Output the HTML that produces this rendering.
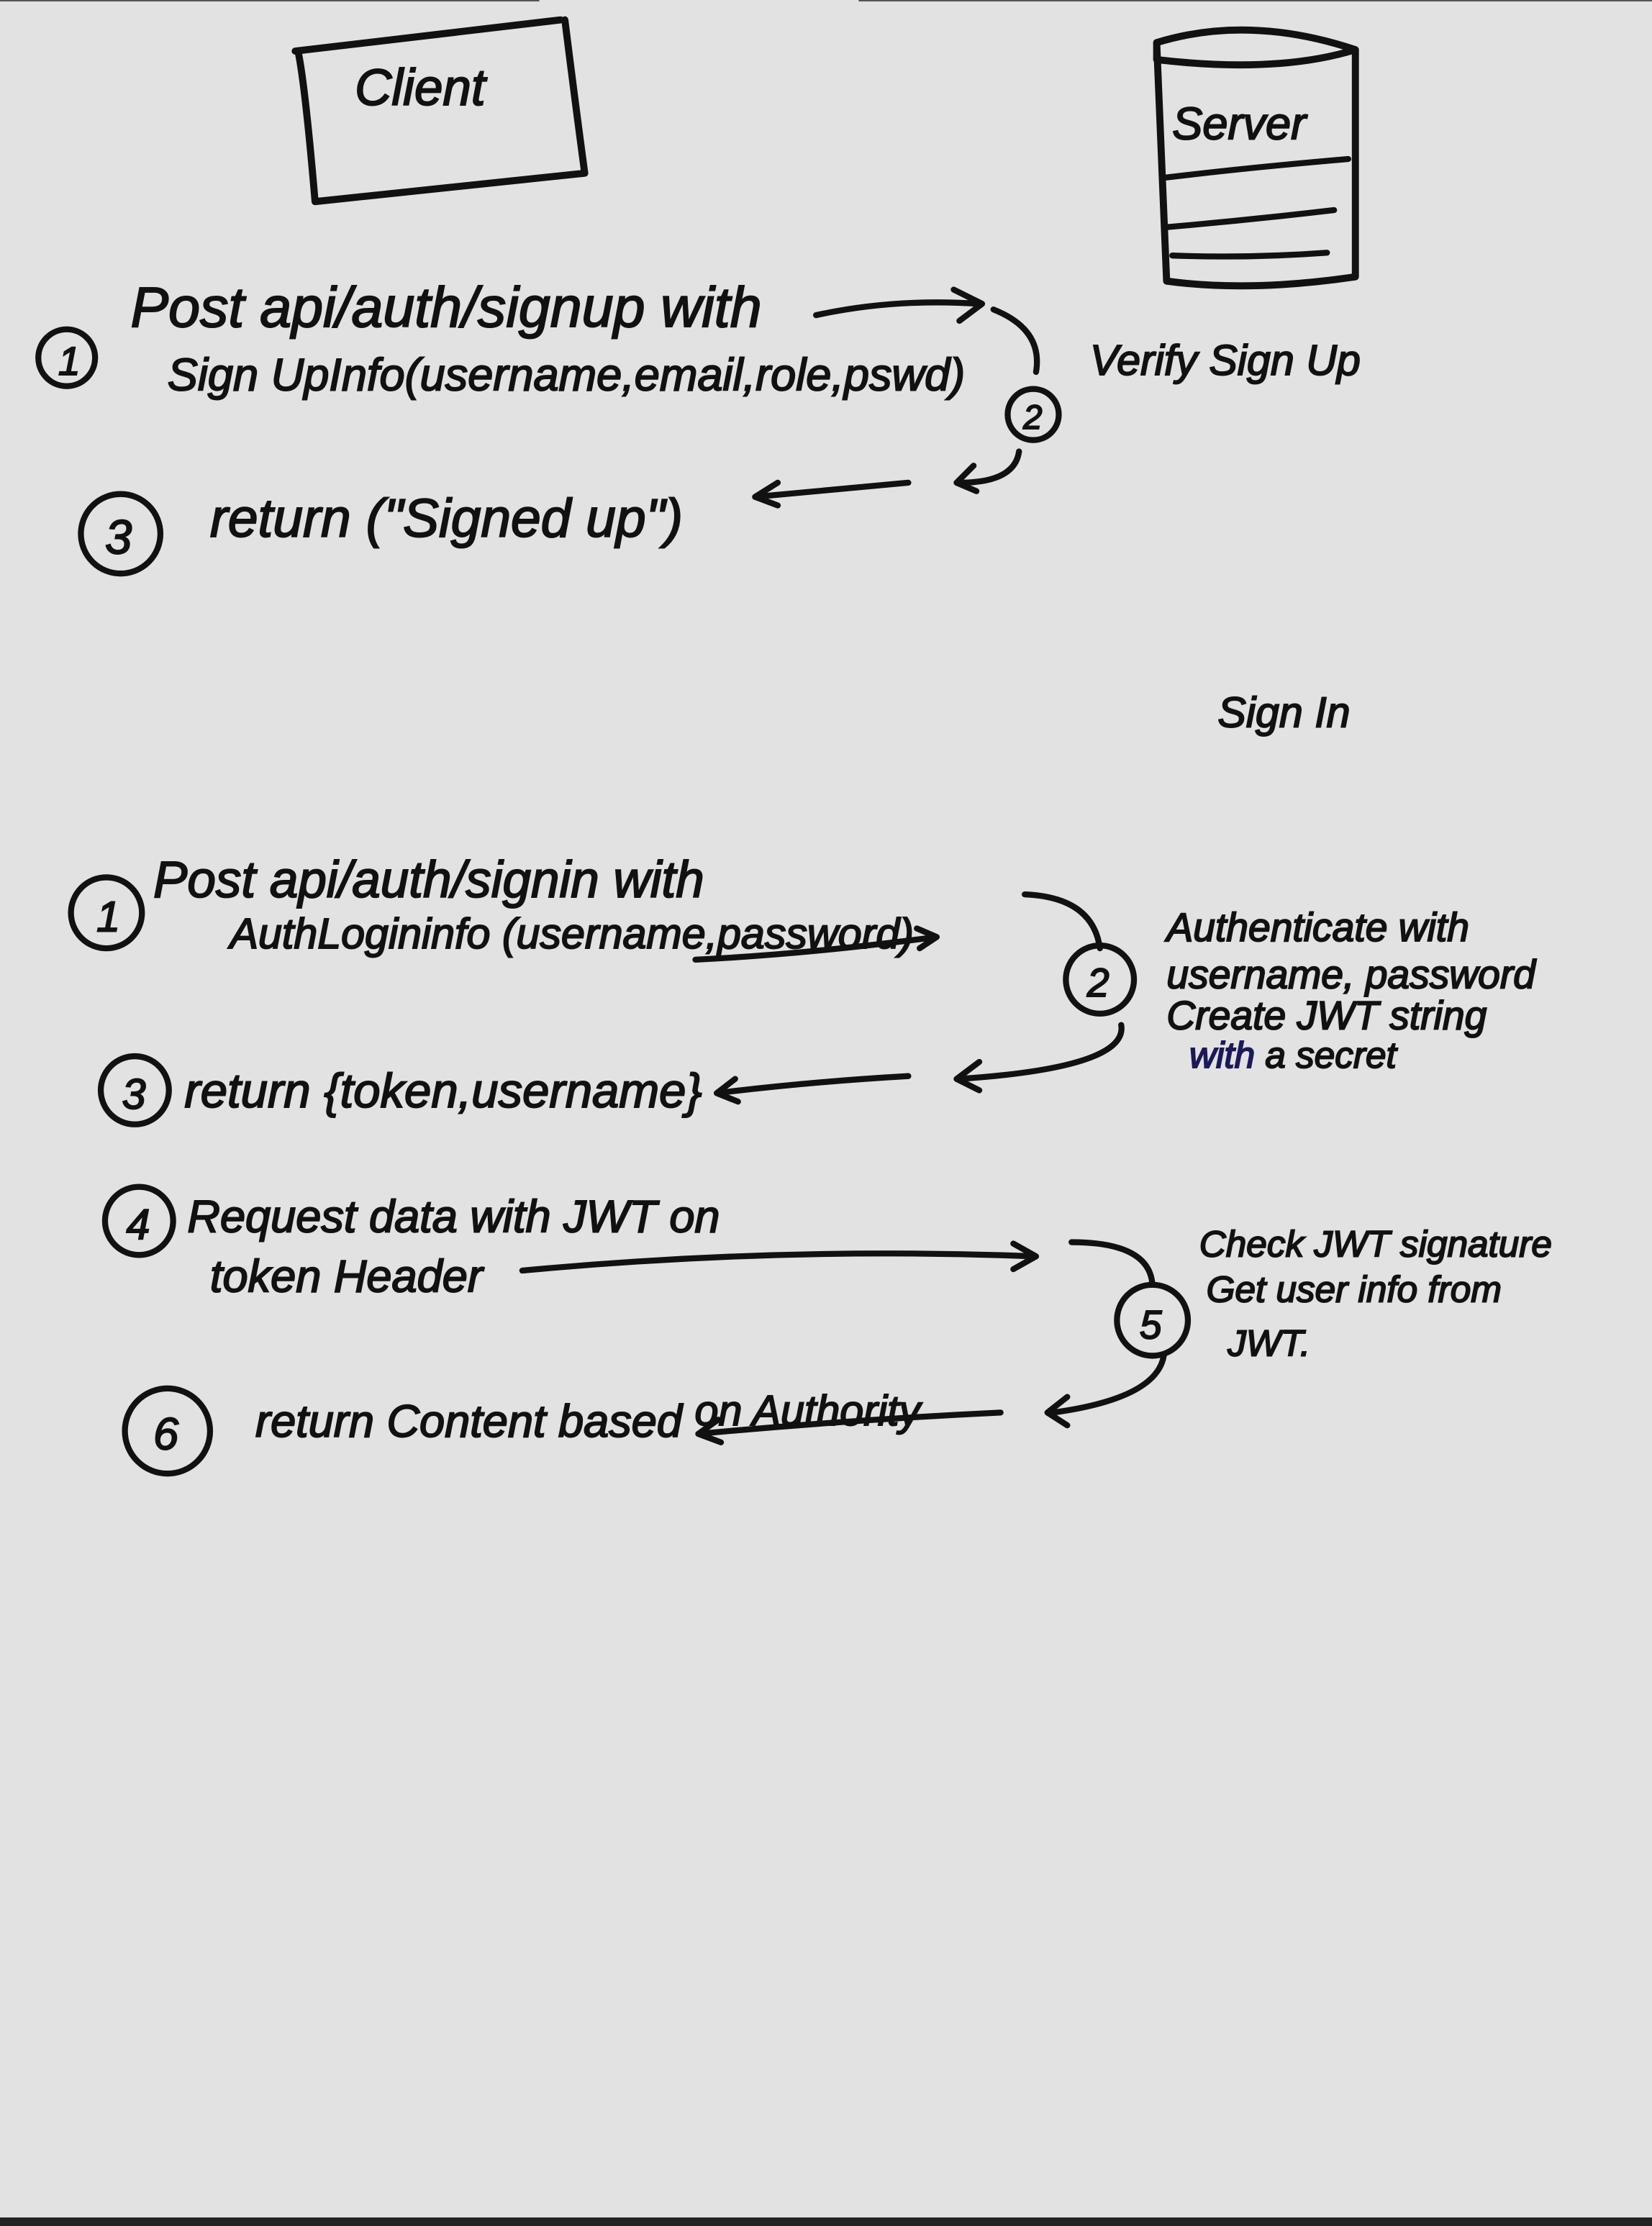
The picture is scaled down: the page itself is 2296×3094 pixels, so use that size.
<!DOCTYPE html>
<html><head><meta charset="utf-8"><style>
html,body{margin:0;padding:0;background:#e2e2e2;}
svg{display:block}
text{font-family:"Liberation Sans",sans-serif;font-style:italic;fill:#111;stroke:#111;stroke-width:1}
.s{fill:none;stroke:#111;stroke-width:4.2;stroke-linecap:round;stroke-linejoin:round}
.b{stroke-width:5}
</style></head><body>
<svg width="2296" height="3094" viewBox="0 0 1164 1568" preserveAspectRatio="none">
<rect width="1164" height="1568" fill="#e2e2e2"/>
<rect x="0" y="1562" width="1164" height="6" fill="#222"/>
<line x1="0" y1="0.5" x2="380" y2="0.5" stroke="#555" stroke-width="1"/>
<line x1="605" y1="0.5" x2="1164" y2="0.5" stroke="#555" stroke-width="1"/>
<!-- Client box -->
<path class="s b" d="M208,36 L395,14 M210,36 Q215,60 222,142 M222,142 L412,122 M398,14 Q405,70 412,122"/>
<text x="250" y="74" font-size="36">Client</text>
<!-- Server cylinder -->
<path class="s b" d="M815,30 Q880,10 955,35 Q900,52 815,42 Z M815,30 L822,198 Q880,206 955,195 L955,35"/>
<text x="826" y="98" font-size="32">Server</text>
<path class="s" d="M822,125 Q880,118 950,112 M822,160 Q880,155 940,148 M826,180 Q880,182 935,178"/>
<!-- Sign up -->
<circle class="s" cx="47" cy="252" r="20"/><text x="41" y="264" font-size="28">1</text>
<text x="92" y="230" font-size="40">Post api/auth/signup with</text>
<text x="118" y="275" font-size="32">Sign UpInfo(username,email,role,pswd)</text>
<path class="s" d="M575,222 Q630,210 690,214 M672,204 L692,214 L676,226 M700,218 Q735,232 730,262"/>
<text x="768" y="264" font-size="30">Verify Sign Up</text>
<circle class="s" cx="728" cy="292" r="18"/><text x="721" y="302" font-size="24">2</text>
<path class="s" d="M718,318 Q715,340 676,340 M686,328 L674,340 L688,346 M640,340 L532,350 M548,340 L532,350 L548,356"/>
<circle class="s" cx="85" cy="376" r="28"/><text x="74" y="390" font-size="34">3</text>
<text x="148" y="378" font-size="38">return ("Signed up")</text>
<text x="858" y="512" font-size="30">Sign In</text>
<!-- Sign in -->
<circle class="s" cx="75" cy="643" r="25"/><text x="68" y="656" font-size="30">1</text>
<text x="108" y="632" font-size="36">Post  api/auth/signin with</text>
<text x="162" y="668" font-size="30">AuthLogininfo (username,password)</text>
<path class="s" d="M490,676 Q570,672 660,660 M646,654 L660,660 L648,668 M722,630 Q770,632 775,668"/>
<circle class="s" cx="775" cy="690" r="24"/><text x="766" y="702" font-size="28">2</text>
<text x="822" y="663" font-size="28">Authenticate with</text>
<text x="822" y="696" font-size="28">username, password</text>
<text x="822" y="725" font-size="28">Create JWT string</text>
<text x="838" y="752" font-size="26"><tspan style="fill:#1a1a5a;stroke:#1a1a5a">with</tspan> a secret</text>
<path class="s" d="M790,722 Q795,752 676,760 M690,748 L674,760 L690,768 M640,758 Q570,762 505,770 M518,760 L505,770 L520,776"/>
<circle class="s" cx="95" cy="768" r="24"/><text x="86" y="781" font-size="30">3</text>
<text x="130" y="780" font-size="34">return {token,username}</text>
<circle class="s" cx="98" cy="860" r="24"/><text x="89" y="873" font-size="30">4</text>
<text x="132" y="868" font-size="32">Request data with JWT on</text>
<text x="148" y="910" font-size="32">token Header</text>
<path class="s" d="M368,895 Q550,878 730,885 M714,876 L730,885 L714,894 M755,875 Q810,875 812,905"/>
<circle class="s" cx="812" cy="930" r="25"/><text x="803" y="943" font-size="28">5</text>
<text x="845" y="885" font-size="26">Check JWT signature</text>
<text x="850" y="917" font-size="26">Get user info from</text>
<text x="865" y="955" font-size="26">JWT.</text>
<path class="s" d="M820,955 Q815,985 742,995 M752,984 L738,995 L752,1004 M705,995 Q600,1000 492,1010 M506,1000 L492,1010 L508,1016"/>
<circle class="s" cx="118" cy="1008" r="30"/><text x="108" y="1021" font-size="32">6</text>
<text x="180" y="1012" font-size="32">return Content based <tspan dy="-8" font-size="30">on Authority</tspan></text>
</svg>
</body></html>
